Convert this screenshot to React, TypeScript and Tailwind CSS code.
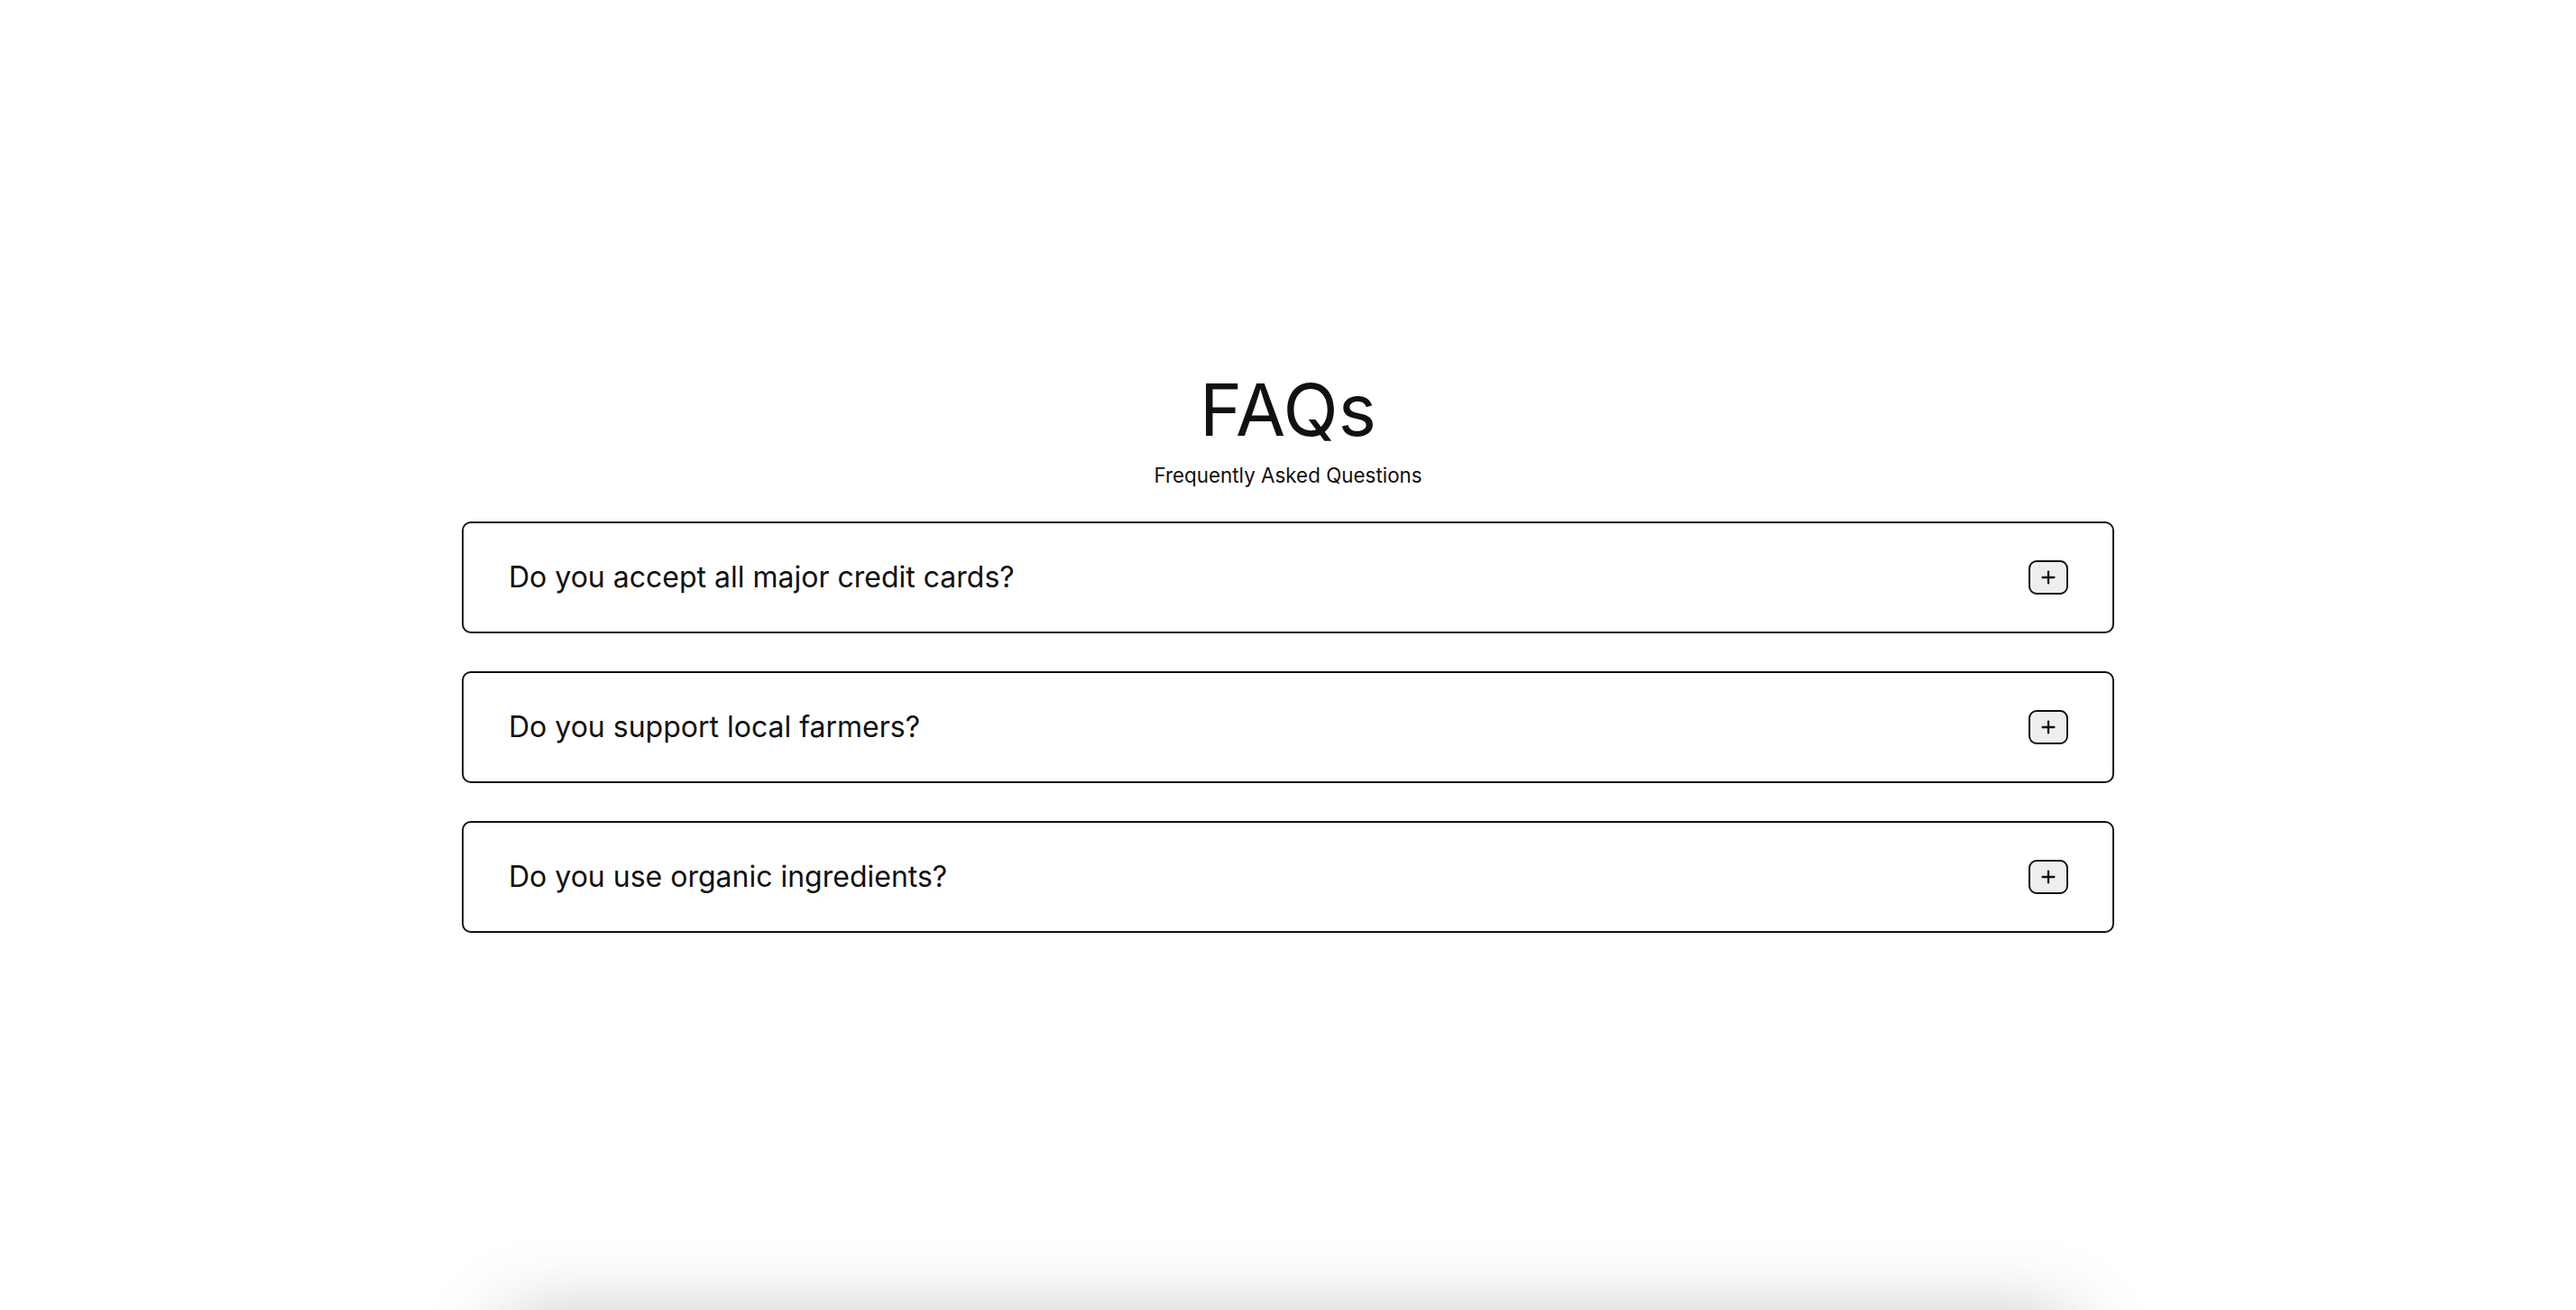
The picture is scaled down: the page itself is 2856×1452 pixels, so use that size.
import { Plus } from 'lucide-react'

const questions = [
  'Do you accept all major credit cards?',
  'Do you support local farmers?',
  'Do you use organic ingredients?',
]

export default function App() {
  return (
    <div className="min-h-screen bg-white overflow-hidden text-[#111111]" style={{ fontFamily: 'Inter, "Noto Sans", sans-serif' }}>
      {/* FAQ section */}
      <section className="h-[1465px] pt-[414px] flex flex-col items-center">
        <h1 className="text-[80px] leading-none font-normal">FAQs</h1>
        <p className="mt-[16px] text-[22.4px] leading-[33px]">Frequently Asked Questions</p>

        <div className="mt-[35px] w-[1832px] flex flex-col gap-[42px]">
          {questions.map((q) => (
            <div
              key={q}
              className="h-[124px] border-2 border-[#111111] rounded-[10px] pl-[50px] pr-[49px] flex items-center justify-between"
            >
              <span className="text-[32px] leading-none">{q}</span>
              <button className="w-[44px] h-[38px] bg-[#eeeeee] border-2 border-[#111111] rounded-[9px] flex items-center justify-center">
                <Plus className="w-[22px] h-[22px]" strokeWidth={2.5} />
              </button>
            </div>
          ))}
        </div>
      </section>

      {/* next section, mostly below the fold */}
      <div className="mx-auto w-[1740px] h-[400px] rounded-[24px] bg-white shadow-[0_0_90px_rgba(0,0,0,0.28)]" />
    </div>
  )
}
